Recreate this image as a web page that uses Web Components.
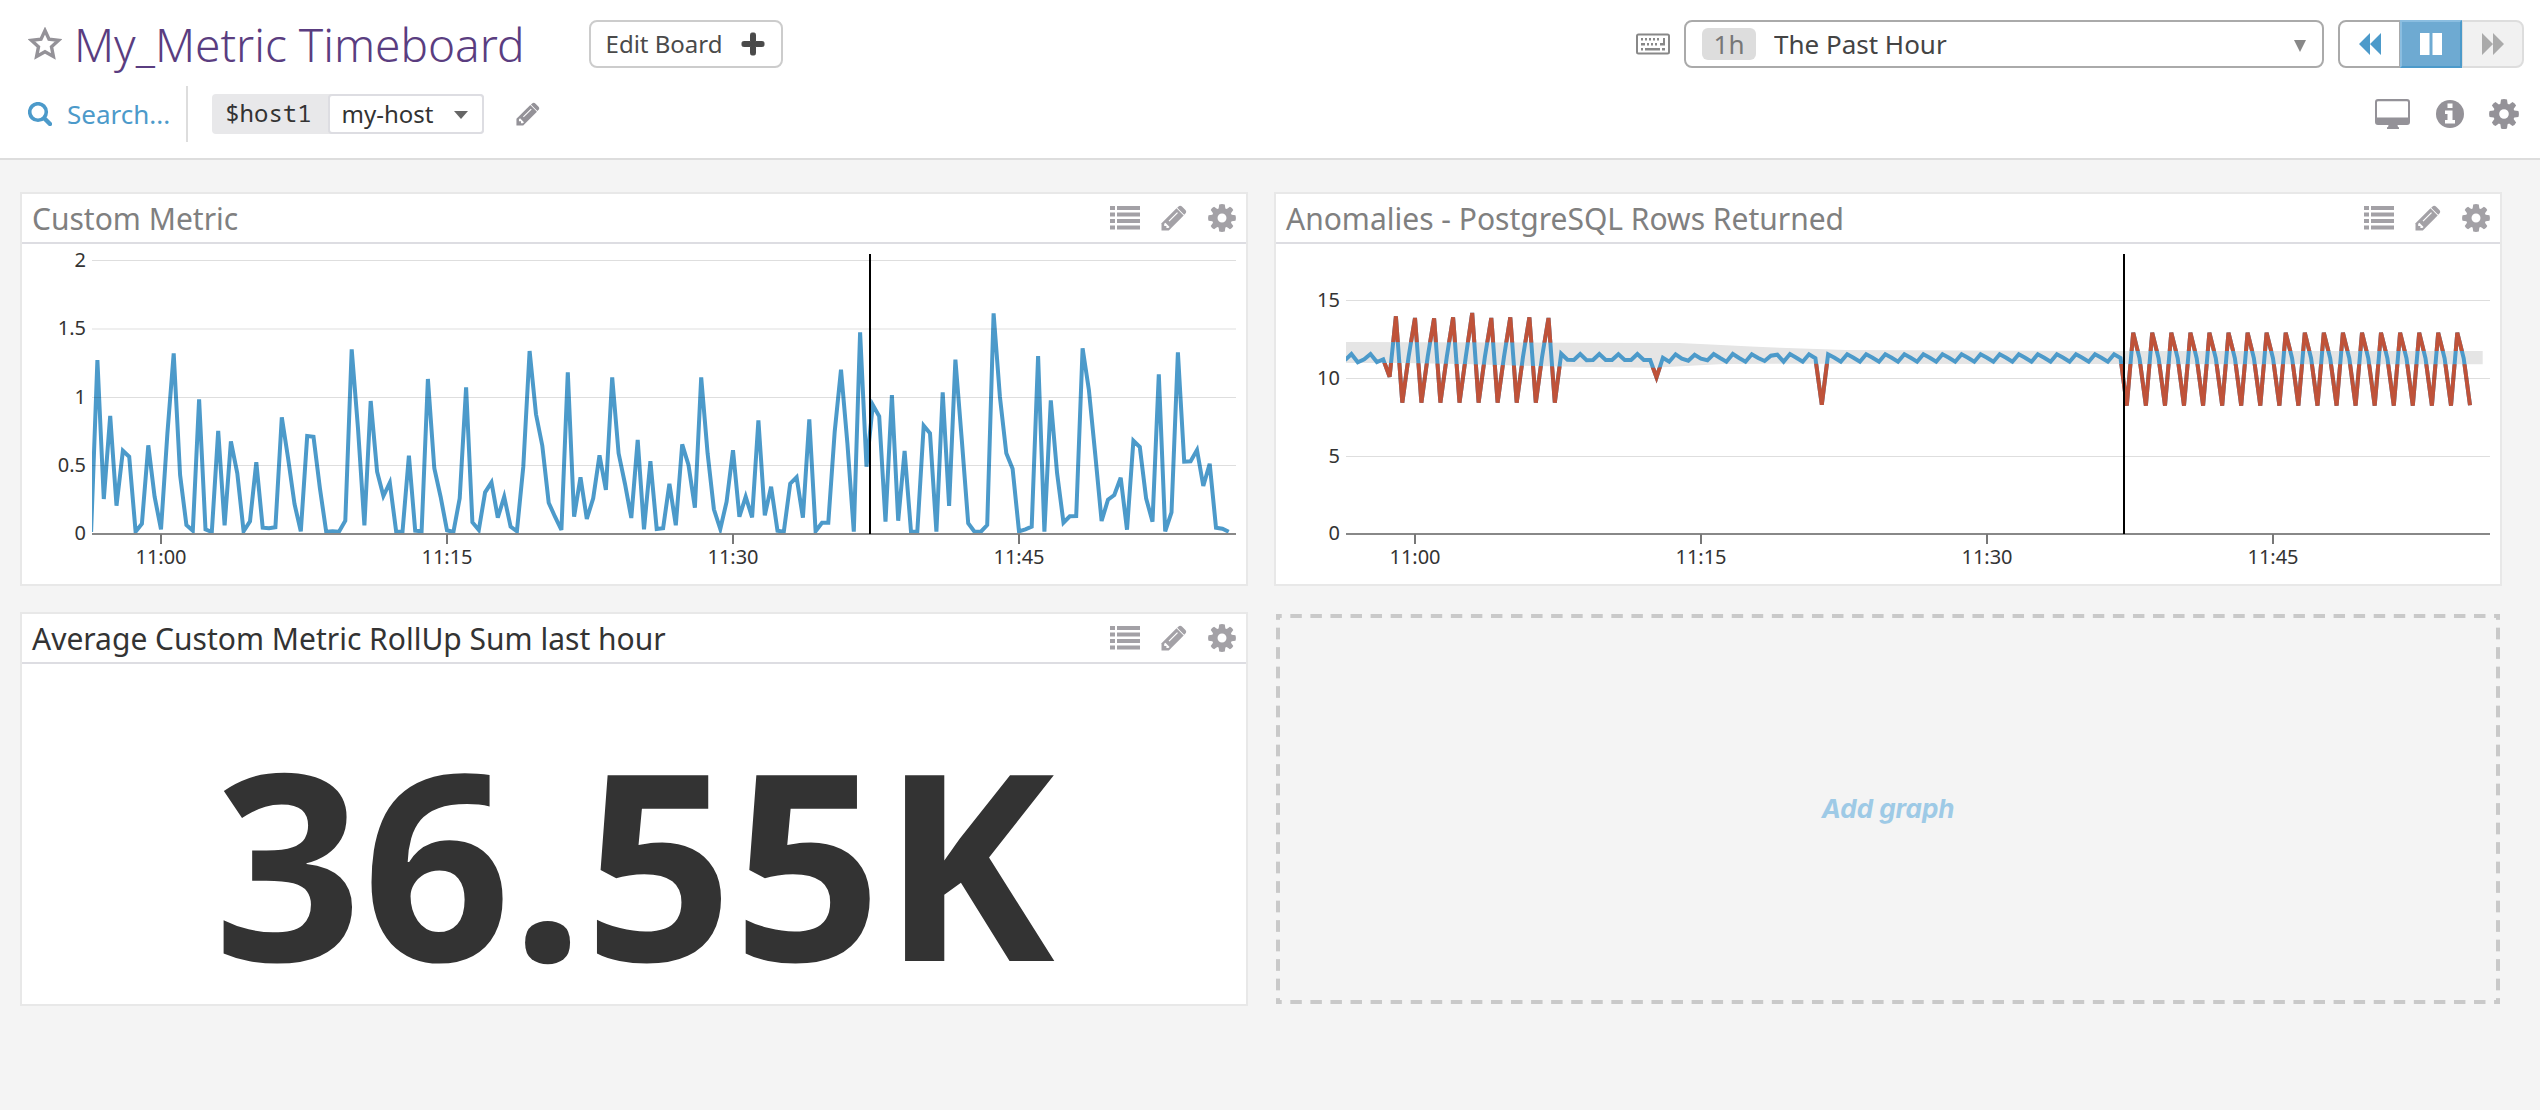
<!DOCTYPE html>
<html lang="en">
<head>
<meta charset="utf-8">
<title>My_Metric Timeboard</title>
<style>
  body { margin: 0; background: #f4f4f4; color: #333; font-family: "Noto Sans", "Open Sans", sans-serif; font-size: 24px; }
</style>
</head>
<body>
<dash-app></dash-app>
<script>
const ICONS = {
  star: ['0 0 34 34', '<path d="M17 3.500l4 8.600 9.600 1.200-7.100 6.500 1.900 9.600-8.400-4.700-8.400 4.700 1.900-9.600-7.100-6.500 9.600-1.200z" fill="none" stroke="currentColor" stroke-width="3.400"/>'],
  plus: ['0 0 24 24', '<path d="M9.500 2.500a1.500 1.500 0 0 1 1.500-1.500h2a1.500 1.500 0 0 1 1.500 1.500v7h7a1.500 1.500 0 0 1 1.500 1.500v2a1.500 1.500 0 0 1-1.500 1.500h-7v7a1.500 1.500 0 0 1-1.500 1.500h-2a1.500 1.500 0 0 1-1.500-1.500v-7h-7a1.500 1.500 0 0 1-1.500-1.500v-2a1.500 1.500 0 0 1 1.500-1.500h7z" stroke="currentColor"/>'],
  search: ['0 0 24 24', '<g fill="none" stroke="currentColor"><circle cx="10" cy="10" r="8.300" stroke-width="3.600"/><path d="M16.500 16.500l5.500 5.500" stroke-width="4.400" stroke-linecap="round"/></g>'],
  pencil: ['0 0 26 26', '<path d="M0.500 25.500V18.200L15.500 3.300l7.200 7.200L7.800 25.500z"/><path d="M17.200 1.800q2-1.900 4 0l3 3q2 2 0 4l-1 1-7-7z"/><path d="M3.200 18.700v2.200h2.200v2.200h2l1.200-1.200-4.200-4.200z" fill="#fff"/><path d="M8 16.200L16.500 7.700" stroke="#fff" stroke-width="1.200"/>'],
  gear: ['-15 -15 30 30', '<path fill-rule="evenodd" d="M-3 -14.400Q0 -15.400 3 -14.400L3.600 -10.300L5.100 -9.600L8.500 -12.100Q11 -11 12.100 -8.500L9.600 -5.100L10.300 -3.600L14.400 -3Q15.400 0 14.400 3L10.300 3.600L9.600 5.100L12.100 8.500Q11 11 8.500 12.100L5.100 9.600L3.600 10.300L3 14.400Q0 15.400 -3 14.400L-3.600 10.300L-5.100 9.600L-8.500 12.100Q-11 11 -12.100 8.500L-9.600 5.100L-10.300 3.600L-14.400 3Q-15.400 0 -14.400 -3L-10.300 -3.600L-9.600 -5.100L-12.100 -8.500Q-11 -11 -8.500 -12.100L-5.100 -9.600L-3.600 -10.300ZM4.800 0A4.800 4.800 0 1 0 -4.800 0A4.800 4.800 0 1 0 4.800 0Z"/>'],
  list: ['0 0 30 24', '<path d="M0 0h5v4H0zM7 0h23v4H7zM0 6.500h5v4H0zM7 6.500h23v4H7zM0 13h5v4H0zM7 13h23v4H7zM0 19.500h5v4H0zM7 19.500h23v4H7z"/>'],
  keyboard: ['0 0 34 22', '<rect x="1" y="1.500" width="32" height="19" rx="1.500" fill="none" stroke="currentColor" stroke-width="2"/><path d="M5 5h2v2.500H5zM9 5h2v2.500H9zM13 5h2v2.500h-2zM17 5h2v2.500h-2zM21 5h2v2.500h-2zM5 10h4v2.500H5zM11 10h2v2.500h-2zM15 10h2v2.500h-2zM19 10h2v2.500h-2zM27 5h2v7.500h-5V10h3zM5 15h2v2.500H5zM9 15h15v2.500H9zM26 15h3v2.500h-3z"/>'],
  monitor: ['0 0 36 30', '<path fill-rule="evenodd" d="M3 0h29a3 3 0 0 1 3 3v20a3 3 0 0 1-3 3H22.500q0 2 1.500 2.500V30H12v-1.500q1.500-.500 1.500-2.500H3a3 3 0 0 1-3-3V3a3 3 0 0 1 3-3zM3 2.200q-1 0-1 1V18.500H33V3.200q0-1-1-1z"/>'],
  info: ['0 0 28 28', '<circle cx="14" cy="14" r="14"/><path d="M11.500 3.500h5v4.500h-5zM9 10.500h7.500V20H19v3.500H9V20h2.500v-6H9z" fill="#fff"/>'],
  back: ['0 0 22 22', '<path d="M11 0v22L0 11zM22 0v22L11 11z"/>'],
  forward: ['0 0 22 22', '<path d="M0 0v22l11-11zM11 0v22l11-11z"/>'],
  pause: ['0 0 22 22', '<path d="M0 0h9.500v22H0zM12.500 0H22v22h-9.500z"/>'],
  down: ['0 0 14 8', '<path d="M0 0h14L7 8z"/>'],
  downTall: ['0 0 12 12', '<path d="M0 0h12L6 12z"/>']
};

class UiIcon extends HTMLElement {
  connectedCallback() {
    const [box, body] = ICONS[this.getAttribute('name')];
    const [w, h] = [this.getAttribute('w'), this.getAttribute('h')];
    const root = this.attachShadow({ mode: 'open' });
    root.innerHTML = `<style>:host{display:block;flex:none}svg{display:block;fill:currentColor}</style>
      <svg width="${w}" height="${h}" viewBox="${box}" aria-hidden="true">${body}</svg>`;
  }
}
customElements.define('ui-icon', UiIcon);

class BoardTitle extends HTMLElement {
  connectedCallback() {
    this.attachShadow({ mode: 'open' }).innerHTML = `<style>
      :host{display:flex;align-items:center}
      button{border:0;background:none;padding:0;margin:0;color:#949298}
      .star{margin-right:12px}
      h1{margin:0;font:300 46px/60px "Noto Sans","Open Sans",sans-serif;color:#5a3d80}
      .edit{display:flex;align-items:center;gap:18px;height:48px;box-sizing:border-box;margin-left:64px;padding:0 16px 0 15px;border:2px solid #ccc;border-radius:8px;background:#fff;color:#4a4a4a;font:24px/32px "Noto Sans",sans-serif}
      </style>
      <button class="star" aria-label="Star this board"><ui-icon name="star" w="34" h="34"></ui-icon></button>
      <h1><slot></slot></h1>
      <button class="edit">Edit Board <ui-icon name="plus" w="24" h="24"></ui-icon></button>`;
  }
}
customElements.define('board-title', BoardTitle);

class TimeControls extends HTMLElement {
  connectedCallback() {
    this.attachShadow({ mode: 'open' }).innerHTML = `<style>
      :host{display:flex;align-items:center;color:#888}
      .keys{border:0;background:none;padding:0;margin:0 14px 0 0;color:#888}
      .range{position:relative;display:flex;align-items:center;width:640px;height:48px;box-sizing:border-box;border:2px solid #aaa;border-radius:8px;background:#fff;padding-left:16px}
      .badge{width:54px;height:32px;border-radius:6px;background:#ddd;color:#777;font:26px/32px "Noto Sans",sans-serif;text-align:center}
      select{flex:1;appearance:none;border:0;background:none;margin:0;padding:0 0 0 18px;color:#444;font:26px/40px "Noto Sans",sans-serif}
      .arrow{position:absolute;right:16px;top:18px;pointer-events:none}
      .play{display:flex;margin-left:14px}
      .play button{display:grid;place-items:center;width:62px;height:48px;box-sizing:border-box;margin:0;padding:0;border:2px solid #aaa;background:#fff;color:#4c9aca}
      .play .back{border-radius:8px 0 0 8px;border-right-width:1px}
      .play .pause{background:#6eaad2;border-color:#8abde0 #4c9aca #4c9aca #8abde0;color:#fff}
      .play .next{background:#f1f1f1;border-color:#ddd;border-left-width:1px;border-radius:0 8px 8px 0;color:#aaa}
      </style>
      <button class="keys" aria-label="Keyboard shortcuts"><ui-icon name="keyboard" w="34" h="22"></ui-icon></button>
      <label class="range"><span class="badge">1h</span>
        <select aria-label="Time range"><option>The Past Hour</option></select>
        <ui-icon class="arrow" name="downTall" w="12" h="12"></ui-icon></label>
      <div class="play">
        <button class="back" aria-label="Back"><ui-icon name="back" w="22" h="22"></ui-icon></button>
        <button class="pause" aria-label="Pause"><ui-icon name="pause" w="22" h="22"></ui-icon></button>
        <button class="next" aria-label="Forward"><ui-icon name="forward" w="22" h="22"></ui-icon></button>
      </div>`;
  }
}
customElements.define('time-controls', TimeControls);

class TemplateVars extends HTMLElement {
  connectedCallback() {
    this.attachShadow({ mode: 'open' }).innerHTML = `<style>
      :host{display:flex;align-items:center}
      a{display:flex;align-items:center;gap:15px;color:#4c9aca;text-decoration:none;font-size:26px;line-height:56px;padding-right:16px;border-right:2px solid #ddd}
      .var{display:flex;margin-left:24px;height:40px;border-radius:4px;background:#e8e8ea}
      label{padding:0 16px 0 13px;font:24px/38px "Noto Sans Mono","DejaVu Sans Mono",monospace;color:#333}
      .pick{position:relative}
      select{appearance:none;width:156px;height:40px;box-sizing:border-box;margin:0;padding:0 0 0 12px;border:2px solid #dddde2;border-radius:4px;background:#fff;color:#333;font:24px/34px "Noto Sans",sans-serif}
      .arrow{position:absolute;right:16px;top:17px;color:#666;pointer-events:none}
      button{border:0;background:none;padding:0;margin:0 0 0 32px;color:#949298}
      </style>
      <a href="#search"><ui-icon name="search" w="24" h="24"></ui-icon>Search...</a>
      <div class="var"><label for="host">$host1</label>
        <div class="pick"><select id="host"><option>my-host</option></select><ui-icon class="arrow" name="down" w="14" h="8"></ui-icon></div></div>
      <button aria-label="Edit variables"><ui-icon name="pencil" w="24" h="24"></ui-icon></button>`;
  }
}
customElements.define('template-vars', TemplateVars);

class BoardTools extends HTMLElement {
  connectedCallback() {
    this.attachShadow({ mode: 'open' }).innerHTML = `<style>
      :host{display:flex;align-items:center;color:#949298}
      button{border:0;background:none;padding:0;margin:0;color:inherit}
      button+button{margin-left:25px}
      </style>
      <button aria-label="TV mode"><ui-icon name="monitor" w="36" h="30"></ui-icon></button>
      <button aria-label="Info"><ui-icon name="info" w="28" h="28"></ui-icon></button>
      <button aria-label="Settings"><ui-icon name="gear" w="30" h="30"></ui-icon></button>`;
  }
}
customElements.define('board-tools', BoardTools);

class GraphCard extends HTMLElement {
  connectedCallback() {
    this.attachShadow({ mode: 'open' }).innerHTML = `<style>
      :host{display:block;box-sizing:border-box;border:2px solid #e8e8e8;background:#fff;min-width:0}
      header{display:flex;align-items:center;height:48px;border-bottom:2px solid #dddde2;padding:0 10px;color:#a3a1a6}
      h2{flex:1;margin:0;padding-top:2px;font:400 30px/46px "Noto Sans",sans-serif;color:var(--title,#808080)}
      button{border:0;background:none;padding:0;margin:0 0 0 21px;color:inherit}
      </style>
      <header><h2>${this.getAttribute('heading')}</h2>
        <button aria-label="Legend"><ui-icon name="list" w="30" h="24"></ui-icon></button>
        <button aria-label="Edit graph"><ui-icon name="pencil" w="26" h="26"></ui-icon></button>
        <button aria-label="Graph settings"><ui-icon name="gear" w="28" h="28"></ui-icon></button>
      </header><slot></slot>`;
  }
}
customElements.define('graph-card', GraphCard);

/* Samples are rows counted from 64px above the plot, three rows to a pixel, one sample every 20 seconds. */
const CUSTOM = [1056,540,957,708,977,812,830,1055,1031,796,950,1048,760,520,885,1035,1052,658,1048,1056,753,1036,784,880,1054,1024,847,1043,1045,1042,712,835,972,1054,768,770,925,1055,1054,1055,1022,508,745,1036,663,875,948,908,1055,1055,827,1052,1054,597,865,950,1051,
1056,955,622,1027,1050,937,907,1013,950,1040,1054,860,513,703,797,968,1010,1050,577,1010,892,1017,955,826,930,592,820,912,1014,780,1048,844,1047,1045,911,1036,793,855,983,592,820,988,1047,965,811,1010,950,1012,721,1006,920,1052,1055,911,892,1013,718,1054,1028,1028,755,569,790,1055,457,860,675,709,
1025,645,1022,813,1055,1055,737,760,1055,637,978,539,780,1030,1055,1055,1035,400,650,820,866,1054,1048,1040,528,1055,661,880,1028,1009,1008,505,630,825,1023,959,945,893,1049,782,801,955,1025,583,1054,997,517,845,844,810,918,851,1043,1046,1055];

const rows = [540,522,547,538,522,546,538,590];
for (const peak of [409,414,415,412,399,414,412,412,414]) rows.push(peak, 668, 530);
rows.pop();
rows.push(521,539,540,522,541,540,522,540,540,523,540,540,522,540,540,592,533,545,523,536,542,524,536,541,522,534,545,522,534,545,523,534,543,527,524,545,522,533,545,523,535,674);
while (rows.length < 122) rows.push(523, 533, 545);
rows.length = 123;
rows[122] = 534;
while (rows.length < 177) rows.push(677, 458, 535);
rows.push(676);
const ANOMALY = rows.slice(0, 178);

const STEP = 286 / 45, T0 = 139;
const px = k => (T0 + k * STEP).toFixed(1);
const py = r => (r / 3 - 64).toFixed(1);
const line = (data, from, to) => 'M' + data.slice(from, to + 1).map((r, i) => px(from + i - 11) + ' ' + py(r)).join('L');

class TimeChart extends HTMLElement {
  connectedCallback() {
    const anomaly = this.getAttribute('series') === 'anomaly';
    const grid = anomaly ? [[56.5,'15'],[134.5,'10'],[212.5,'5'],[290,'0']] : [[16.5,'2'],[85,'1.5'],[153.5,'1'],[221.5,'0.5'],[290,'0']];
    const times = ['11:00','11:15','11:30','11:45'];
    const top = '70 98L303 98.700 403 99 435 100.500 475 102.500 504 103.800 570 106 820 107 1206.700 107';
    const bottom = '1206.700 120.300L820 120 504 119.800 447 120 410 122 377 123.700 297 122.700 247 121.700 197 120.300 127 119 70 119';
    const out = anomaly ? [[6,34],[48,50],[74,76],[122,177]].map(([a, b]) => line(ANOMALY, a, b)).join('') : '';
    this.attachShadow({ mode: 'open' }).innerHTML = `<style>
      :host{display:block}
      svg{display:block;width:100%;height:auto;font:20px "Noto Sans",sans-serif;fill:#333}
      .s{fill:none;stroke:#4c9aca;stroke-width:4}.o{stroke:#bf5239}
      .g{stroke:#000;stroke-opacity:.13}.v{text-anchor:end}.t{text-anchor:middle}
      </style>
      <svg viewBox="0 0 1224 340" role="img" aria-label="Time series">
      <clipPath id="plot"><path d="M70 0H1214V290H70z"/></clipPath>
      <clipPath id="out"><path d="M${top}V0H70z"/><path d="M${bottom}V340H1206.700z"/></clipPath>
      ${anomaly ? `<path d="M${top}L${bottom}z" fill="#e5e5e5"/>` : ''}
      <g clip-path="url(#plot)"><path class="s" d="${line(anomaly ? ANOMALY : CUSTOM, 0, 200)}"/></g>
      ${anomaly ? `<g clip-path="url(#out)"><path class="s o" d="${out}"/></g>` : ''}
      ${grid.slice(0, -1).map(([y]) => `<path class="g" d="M70 ${y}H1214"/>`).join('')}
      <path d="M70 290H1214" stroke="#888" stroke-width="2"/>
      ${times.map((t, i) => `<path d="M${139 + 286 * i} 290v10" stroke="#777" stroke-width="2"/><text class="t" x="${139 + 286 * i}" y="320">${t}</text>`).join('')}
      ${grid.map(([y, t]) => `<text class="v" x="64" y="${Math.round(y + 6)}">${t}</text>`).join('')}
      <path d="M848 10V290" stroke="#000" stroke-width="2"/>
      </svg>`;
  }
}
customElements.define('time-chart', TimeChart);

class QueryValue extends HTMLElement {
  connectedCallback() {
    this.attachShadow({ mode: 'open' }).innerHTML = `<style>
      :host{display:block;padding-top:66px;text-align:center;font:700 260px/260px "Noto Sans",sans-serif;color:#333}
      </style><slot></slot>`;
  }
}
customElements.define('query-value', QueryValue);

class AddGraph extends HTMLElement {
  connectedCallback() {
    this.attachShadow({ mode: 'open' }).innerHTML = `<style>
      :host{display:flex;padding:2px}
      button{flex:1;border:0;margin:0;padding:0;color:#9ecae6;font:italic 700 26px/32px Inter,"Liberation Sans",sans-serif;
        --c:#c9c9c9;--h:linear-gradient(90deg,var(--c) 30%,transparent 30% 70%,var(--c) 70%);--v:linear-gradient(var(--c) 30%,transparent 30% 70%,var(--c) 70%);
        background:var(--h) 0 0/20px 4px round no-repeat,var(--h) 0 100%/20px 4px round no-repeat,var(--v) 0 0/4px 20px no-repeat round,var(--v) 100% 0/4px 20px no-repeat round}
      </style><button>Add graph</button>`;
  }
}
customElements.define('add-graph', AddGraph);

class DashApp extends HTMLElement {
  connectedCallback() {
    this.attachShadow({ mode: 'open' }).innerHTML = `<style>
      :host{display:block}
      .bar{background:#fff;border-bottom:2px solid #ddd;padding:14px 16px 16px 28px}
      .row{display:flex;justify-content:space-between;align-items:center}
      .row.first{height:60px}.row.second{height:56px;padding-top:12px;padding-right:5px}
      main{display:grid;grid-template-columns:1fr 1fr;grid-auto-rows:1fr;gap:26px;padding:32px 38px 32px 20px}
      .dark{--title:#333}
      </style>
      <div class="bar">
        <div class="row first"><board-title>My_Metric Timeboard</board-title><time-controls></time-controls></div>
        <div class="row second"><template-vars></template-vars><board-tools></board-tools></div>
      </div>
      <main>
        <graph-card heading="Custom Metric"><time-chart series="custom"></time-chart></graph-card>
        <graph-card heading="Anomalies - PostgreSQL Rows Returned"><time-chart series="anomaly"></time-chart></graph-card>
        <graph-card class="dark" heading="Average Custom Metric RollUp Sum last hour"><query-value>36.55K</query-value></graph-card>
        <add-graph></add-graph>
      </main>`;
  }
}
customElements.define('dash-app', DashApp);
</script>
</body>
</html>
